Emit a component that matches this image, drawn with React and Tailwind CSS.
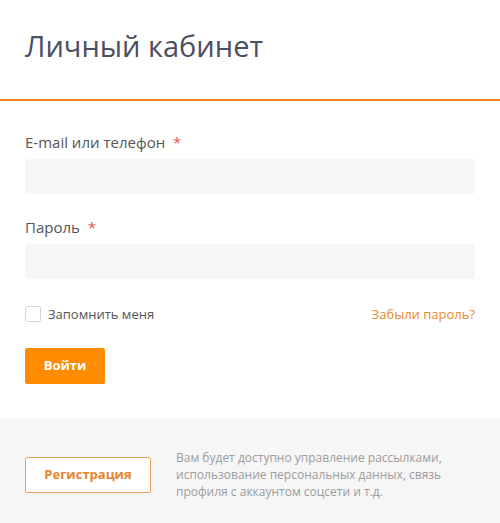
export default function App() {
  return (
    <div className="w-[500px] bg-white text-[#555] [font-family:'Open_Sans',sans-serif]">
      <div className="px-[25px] pt-[26px] pb-[33px] border-b-2 border-[#ee7f22]">
        <h1 className="text-[29px] leading-[40px] text-[#4b4f63]">Личный кабинет</h1>
      </div>

      <div className="px-[25px] pt-[30px] pb-[35px]">
        <label className="block text-[15px] leading-[22px] mb-[6px]">
          E-mail или телефон <span className="text-[#e2574c] ml-[4px]">*</span>
        </label>
        <input className="block w-full h-[35px] rounded-[3px] bg-[#f6f6f6] outline-none px-3" />

        <label className="block text-[15px] leading-[22px] mt-[22px] mb-[6px]">
          Пароль <span className="text-[#e2574c] ml-[4px]">*</span>
        </label>
        <input type="password" className="block w-full h-[35px] rounded-[3px] bg-[#f6f6f6] outline-none px-3" />

        <div className="flex items-center justify-between mt-[25px]">
          <label className="flex items-center gap-[7px] text-[13px] leading-[20px]">
            <span className="w-[16px] h-[16px] rounded-[2px] border border-[#d6d6d6] bg-white" />
            Запомнить меня
          </label>
          <a className="text-[13px] leading-[20px] text-[#e8882d]">Забыли пароль?</a>
        </div>

        <button className="mt-[24px] w-[80px] h-[36px] rounded-[2px] bg-[#ff8b00] text-white text-[13px] font-bold">
          Войти
        </button>
      </div>

      <div className="bg-[#f6f6f6] px-[25px] pt-[30px] pb-[30px] flex items-center gap-[25px]">
        <button className="w-[126px] h-[36px] shrink-0 border border-[#e9a25a] rounded-[2px] bg-white text-[#e8842a] text-[13px] font-bold">
          Регистрация
        </button>
        <p className="text-[12px] leading-[17px] text-[#9c9c9c]">
          Вам будет доступно управление рассылками, использование персональных данных, связь профиля с аккаунтом соцсети и т.д.
        </p>
      </div>
    </div>
  );
}
